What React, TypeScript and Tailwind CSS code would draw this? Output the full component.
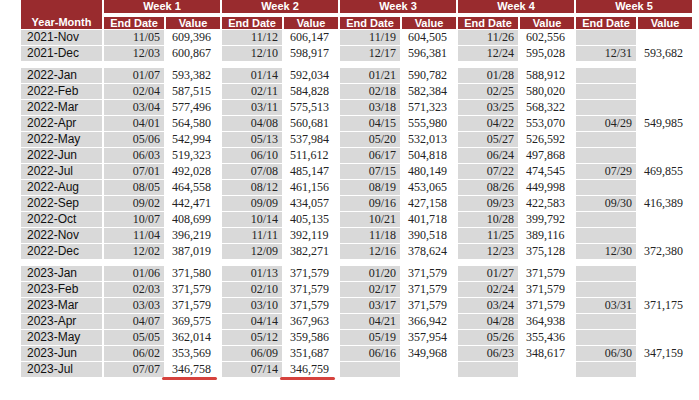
import { Fragment } from "react"

type Week = [string, string] | null

type Row = { month: string; weeks: Week[]; mark?: boolean }

const group2021: Row[] = [
    { month: "2021-Nov", weeks: [["11/05", "609,396"], ["11/12", "606,147"], ["11/19", "604,505"], ["11/26", "602,556"], null] },
    { month: "2021-Dec", weeks: [["12/03", "600,867"], ["12/10", "598,917"], ["12/17", "596,381"], ["12/24", "595,028"], ["12/31", "593,682"]] },
]

const group2022: Row[] = [
    { month: "2022-Jan", weeks: [["01/07", "593,382"], ["01/14", "592,034"], ["01/21", "590,782"], ["01/28", "588,912"], null] },
    { month: "2022-Feb", weeks: [["02/04", "587,515"], ["02/11", "584,828"], ["02/18", "582,384"], ["02/25", "580,020"], null] },
    { month: "2022-Mar", weeks: [["03/04", "577,496"], ["03/11", "575,513"], ["03/18", "571,323"], ["03/25", "568,322"], null] },
    { month: "2022-Apr", weeks: [["04/01", "564,580"], ["04/08", "560,681"], ["04/15", "555,980"], ["04/22", "553,070"], ["04/29", "549,985"]] },
    { month: "2022-May", weeks: [["05/06", "542,994"], ["05/13", "537,984"], ["05/20", "532,013"], ["05/27", "526,592"], null] },
    { month: "2022-Jun", weeks: [["06/03", "519,323"], ["06/10", "511,612"], ["06/17", "504,818"], ["06/24", "497,868"], null] },
    { month: "2022-Jul", weeks: [["07/01", "492,028"], ["07/08", "485,147"], ["07/15", "480,149"], ["07/22", "474,545"], ["07/29", "469,855"]] },
    { month: "2022-Aug", weeks: [["08/05", "464,558"], ["08/12", "461,156"], ["08/19", "453,065"], ["08/26", "449,998"], null] },
    { month: "2022-Sep", weeks: [["09/02", "442,471"], ["09/09", "434,057"], ["09/16", "427,158"], ["09/23", "422,583"], ["09/30", "416,389"]] },
    { month: "2022-Oct", weeks: [["10/07", "408,699"], ["10/14", "405,135"], ["10/21", "401,718"], ["10/28", "399,792"], null] },
    { month: "2022-Nov", weeks: [["11/04", "396,219"], ["11/11", "392,119"], ["11/18", "390,518"], ["11/25", "389,116"], null] },
    { month: "2022-Dec", weeks: [["12/02", "387,019"], ["12/09", "382,271"], ["12/16", "378,624"], ["12/23", "375,128"], ["12/30", "372,380"]] },
]

const group2023: Row[] = [
    { month: "2023-Jan", weeks: [["01/06", "371,580"], ["01/13", "371,579"], ["01/20", "371,579"], ["01/27", "371,579"], null] },
    { month: "2023-Feb", weeks: [["02/03", "371,579"], ["02/10", "371,579"], ["02/17", "371,579"], ["02/24", "371,579"], null] },
    { month: "2023-Mar", weeks: [["03/03", "371,579"], ["03/10", "371,579"], ["03/17", "371,579"], ["03/24", "371,579"], ["03/31", "371,175"]] },
    { month: "2023-Apr", weeks: [["04/07", "369,575"], ["04/14", "367,963"], ["04/21", "366,942"], ["04/28", "364,938"], null] },
    { month: "2023-May", weeks: [["05/05", "362,014"], ["05/12", "359,586"], ["05/19", "357,954"], ["05/26", "355,436"], null] },
    { month: "2023-Jun", weeks: [["06/02", "353,569"], ["06/09", "351,687"], ["06/16", "349,968"], ["06/23", "348,617"], ["06/30", "347,159"]] },
    { month: "2023-Jul", weeks: [["07/07", "346,758"], ["07/14", "346,759"], null, null, null], mark: true },
]

const groups = [group2021, group2022, group2023]

const sans = "font-['Liberation_Sans',Arial,sans-serif]"
const serif = "font-['Liberation_Serif','Times_New_Roman',serif]"
const red = "bg-[#992b2e]"

const DataRow = ({ row }: { row: Row }) => (
    <tr className="h-[15px]">
        <td className={`p-0 pl-[6px] bg-[#d9d9d9] text-[12px] leading-[15px] text-[#111] ${sans}`}>{row.month}</td>
        {row.weeks.map((w, i) => (
            <Fragment key={i}>
                <td className={`p-0 pr-[4px] bg-[#d9d9d9] text-right text-[12px] leading-[15px] text-[#222] ${serif}`}>
                    {w ? w[0] : ""}
                </td>
                <td className={`relative p-0 pl-[6px] text-left text-[12px] leading-[15px] text-[#222] ${serif}`}>
                    {w ? w[1] : ""}
                    {row.mark && w && (
                        <span className="absolute left-[-4px] right-[3px] bottom-[-3px] h-[3px] rounded-full bg-[#d6423d]" />
                    )}
                </td>
            </Fragment>
        ))}
    </tr>
)

export default function App() {
    return (
        <div className="w-[699px] h-[400px] bg-white overflow-hidden">
            <table className="table-fixed border-separate border-spacing-x-0.5 border-spacing-y-px ml-[19px] -mt-px">
                <colgroup>
                    <col className="w-[81px]" />
                    {[0, 1, 2, 3, 4].map((i) => (
                        <Fragment key={i}>
                            <col className="w-[60px]" />
                            <col className="w-[54px]" />
                        </Fragment>
                    ))}
                </colgroup>
                <thead>
                    <tr className="h-[13px]">
                        <th rowSpan={3} className={`p-0 align-bottom ${red} text-white text-[11px] leading-[13px] font-bold ${sans}`}>
                            Year-Month
                        </th>
                        {[1, 2, 3, 4, 5].map((n) => (
                            <th key={n} colSpan={2} className={`p-0 ${red} text-white text-[11px] leading-[13px] font-bold ${sans}`}>
                                Week {n}
                            </th>
                        ))}
                    </tr>
                    <tr className="h-[2px]">
                        <td colSpan={10} className="p-0 h-[2px]" />
                    </tr>
                    <tr className="h-[12px]">
                        {[0, 1, 2, 3, 4].map((i) => (
                            <Fragment key={i}>
                                <th className={`p-0 ${red} text-white text-[11px] leading-[12px] font-bold ${sans}`}>End Date</th>
                                <th className={`p-0 ${red} text-white text-[11px] leading-[12px] font-bold ${sans}`}>Value</th>
                            </Fragment>
                        ))}
                    </tr>
                </thead>
                <tbody>
                    {groups.map((g, gi) => (
                        <Fragment key={gi}>
                            {gi > 0 && (
                                <tr className="h-[5px]">
                                    <td colSpan={11} className="p-0 h-[5px]" />
                                </tr>
                            )}
                            {g.map((row) => (
                                <DataRow key={row.month} row={row} />
                            ))}
                        </Fragment>
                    ))}
                </tbody>
            </table>
        </div>
    )
}
